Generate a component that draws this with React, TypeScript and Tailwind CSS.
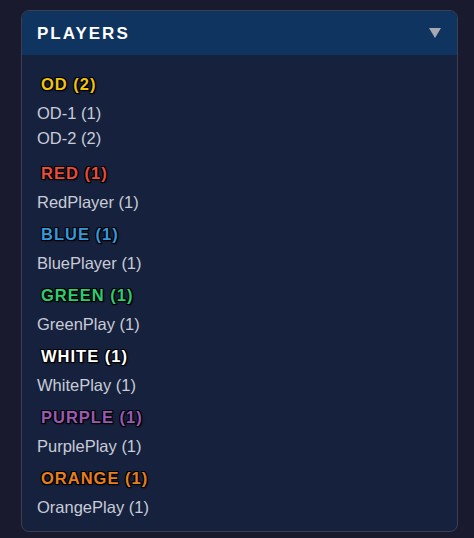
import React from "react";

const teams = [
  { name: "OD", count: 2, color: "#f1c40f", players: ["OD-1 (1)", "OD-2 (2)"] },
  { name: "RED", count: 1, color: "#e74c3c", players: ["RedPlayer (1)"] },
  { name: "BLUE", count: 1, color: "#3498db", players: ["BluePlayer (1)"] },
  { name: "GREEN", count: 1, color: "#2ecc71", players: ["GreenPlay (1)"] },
  { name: "WHITE", count: 1, color: "#ffffff", players: ["WhitePlay (1)"] },
  { name: "PURPLE", count: 1, color: "#9b59b6", players: ["PurplePlay (1)"] },
  { name: "ORANGE", count: 1, color: "#e67e22", players: ["OrangePlay (1)"] },
];

const shadow =
  "-1px -1px 0 #000, 1px -1px 0 #000, -1px 1px 0 #000, 1px 1px 0 #000, 1px 1px 2px #000";

export default function App() {
  return (
    <div
      className="min-h-[538px] w-[474px] bg-[#1a1a2e] pl-[21px] pt-[10px]"
      style={{ fontFamily: '"Liberation Sans", Arial, sans-serif' }}
    >
      <div className="w-[437px] overflow-hidden rounded-[8px] border border-[#3a3f52] bg-[#16213e]">
        <div className="flex h-[44px] items-center justify-between bg-[#0f3460] pl-[15px] pr-[16px]">
          <span className="text-[17px] font-bold leading-none tracking-[2px] text-white">PLAYERS</span>
          <svg width="12" height="10" viewBox="0 0 12 10">
            <polygon points="0,0 12,0 6,10" fill="#a7a9b0" />
          </svg>
        </div>
        <div className="px-[15px] pb-[11px] pt-[19px]">
          {teams.map((t, i) => (
            <div key={t.name} className={i === 0 ? "" : i === 1 ? "mt-[12px]" : "mt-[9px]"}>
              <div
                className="mb-[7px] pl-[4px] text-[16.5px] font-bold leading-[20px] tracking-[1px]"
                style={{ color: t.color, textShadow: shadow }}
              >
                {t.name} ({t.count})
              </div>
              {t.players.map((p) => (
                <div key={p} className="text-[16.5px] leading-[25px] text-[#c8ccd6]">
                  {p}
                </div>
              ))}
            </div>
          ))}
        </div>
      </div>
    </div>
  );
}
